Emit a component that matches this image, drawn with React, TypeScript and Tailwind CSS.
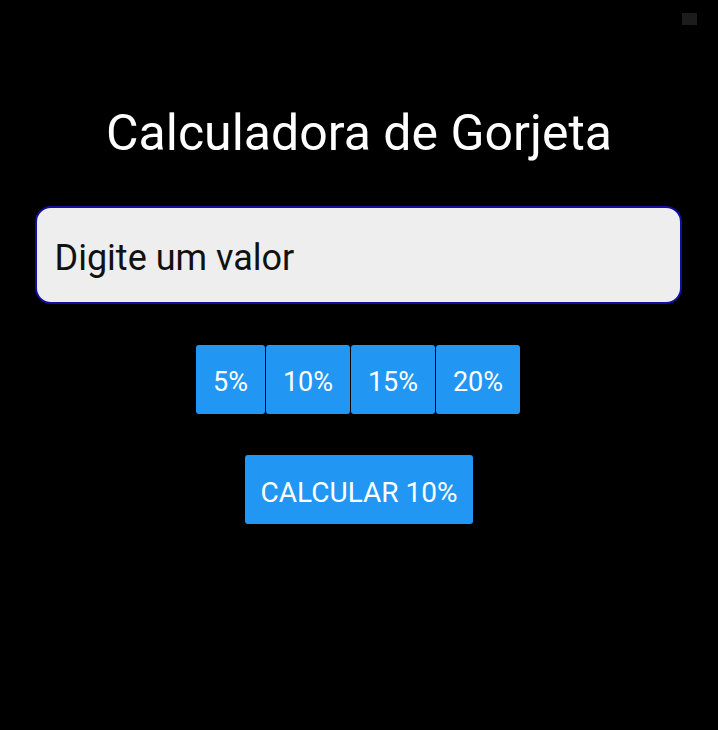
export default function App() {
  const tips = [
    { label: "5%", w: "w-[69px]" },
    { label: "10%", w: "w-[84px]" },
    { label: "15%", w: "w-[84px]" },
    { label: "20%", w: "w-[84px]" },
  ];
  return (
    <div
      className="relative h-[730px] w-[718px] bg-black"
      style={{ fontFamily: "Roboto, 'Noto Sans', sans-serif" }}
    >
      <div className="absolute right-[21px] top-[13px] h-[12px] w-[15px] bg-[#1c1c1c]" />
      <div className="flex flex-col items-center pt-[103px]">
        <h1 className="text-[50px] leading-[60px] text-white">Calculadora de Gorjeta</h1>
        <div className="mt-[43px] flex h-[98px] w-[647px] -translate-x-[1px] items-center rounded-[16px] border-2 border-[#1010a0] bg-[#eeeeee] px-[18px] pt-[6px]">
          <span className="text-[36px] text-[#111]">Digite um valor</span>
        </div>
        <div className="mt-[41px] flex -translate-x-[1px] gap-[1px]">
          {tips.map((t) => (
            <button
              key={t.label}
              className={`flex h-[69px] ${t.w} items-center justify-center rounded-[3px] bg-[#2196f3] pt-[6px] text-[27px] text-white`}
            >
              {t.label}
            </button>
          ))}
        </div>
        <button className="mt-[41px] flex h-[69px] w-[228px] items-center justify-center rounded-[3px] bg-[#2196f3] pt-[6px] text-[28px] text-white">
          CALCULAR 10%
        </button>
      </div>
    </div>
  );
}
